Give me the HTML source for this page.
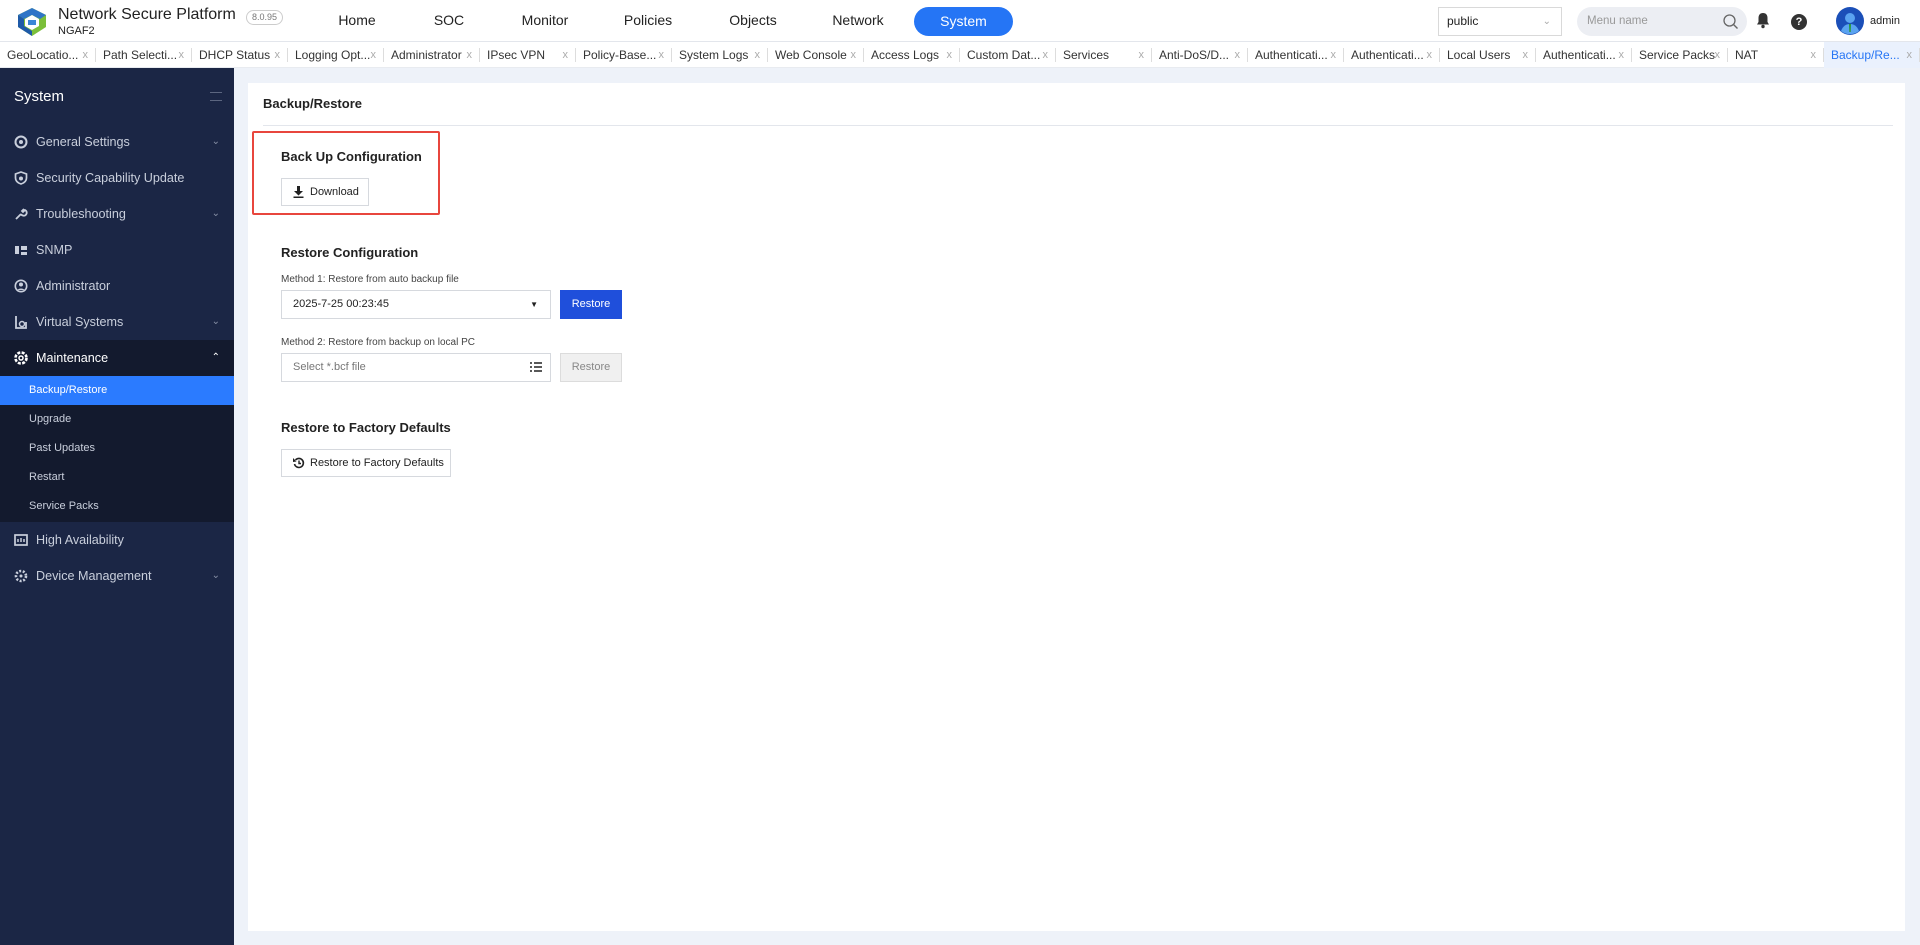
<!DOCTYPE html>
<html><head><meta charset="utf-8"><style>
*{box-sizing:border-box;margin:0;padding:0}
body{width:1920px;height:945px;overflow:hidden;font-family:"Liberation Sans",Arial,sans-serif;background:#eef2f9;position:relative;color:#222}
.hdr{position:absolute;left:0;top:0;width:1920px;height:42px;background:#fff;border-bottom:1px solid #e3e6ec}
.abs{position:absolute}
.nav{position:absolute;top:12px;font-size:14px;color:#222;transform:translateX(-50%)}
.tabs{position:absolute;top:42px;left:0;width:1920px;height:26px;background:#fff;border-bottom:1px solid #e8ebf0}
.tab{position:absolute;top:0;height:26px;width:96px;font-size:12px;line-height:26px;padding-left:7px;color:#333;white-space:nowrap}
.tab:after{content:"";position:absolute;right:0;top:6px;height:14px;border-right:1px solid #ddd}
.tab i{position:absolute;right:8px;top:0;font-style:normal;color:#aaa;font-size:11px}
.side{position:absolute;left:0;top:68px;width:234px;height:877px;background:#1b2645}
.mi{position:absolute;left:0;width:234px;height:36px;line-height:36px;font-size:12.6px;color:#c9cfdc;padding-left:36px}
.mi svg{position:absolute;left:14px;top:11px}
.mi .ch{position:absolute;right:14px;top:0;font-size:10px;color:#8790a6}
.sub{position:absolute;left:0;width:234px;height:29px;line-height:29px;font-size:11px;color:#c9cfdc;padding-left:29px}
.card{position:absolute;left:248px;top:83px;width:1657px;height:848px;background:#fff}
.h{position:absolute;font-size:13px;font-weight:bold;color:#222}
.lbl{position:absolute;font-size:10px;color:#444}
.btn{position:absolute;border:1px solid #d6d9de;background:#fff;font-size:11px;height:28px;line-height:26px;color:#222}
</style></head><body>
<div class="hdr">
 <svg class="abs" style="left:14px;top:7px" width="36" height="30" viewBox="0 0 36 30"><path d="M18 1 L32 8 L32 20 L18 29 L4 20 L4 8Z" fill="#7bbf3a"/><path d="M18 1 L32 8 L26 12 L18 8 L10 12 L4 8Z" fill="#2f75c7"/><path d="M4 8 L10 12 L10 19 L18 24 L18 29 L4 20Z" fill="#1e5aa8"/><path d="M11 12 L18 8 L25 12 L25 19 L18 23 L11 19Z" fill="#fff"/><path d="M14 13 L22 13 L22 18 L14 18Z" fill="#3a86d6"/></svg>
 <div class="abs" style="left:58px;top:6px;font-size:16px;color:#222">Network Secure Platform</div>
 <div class="abs" style="left:58px;top:25px;font-size:11px;color:#222">NGAF2</div>
 <div class="abs" style="left:246px;top:10px;width:37px;height:15px;border:1px solid #ccc;border-radius:8px;font-size:9px;color:#777;text-align:center;line-height:13px">8.0.95</div>
 <div class="nav" style="left:357px">Home</div>
 <div class="nav" style="left:449px">SOC</div>
 <div class="nav" style="left:545px">Monitor</div>
 <div class="nav" style="left:648px">Policies</div>
 <div class="nav" style="left:753px">Objects</div>
 <div class="nav" style="left:858px">Network</div>
 <div class="abs" style="left:914px;top:7px;width:99px;height:29px;border-radius:15px;background:#2575f5;color:#fff;font-size:14px;text-align:center;line-height:29px">System</div>
 <div class="abs" style="left:1438px;top:7px;width:124px;height:29px;border:1px solid #d9d9d9;font-size:12px;line-height:27px;padding-left:8px;color:#222">public<span style="position:absolute;right:10px;color:#aaa;font-size:10px">&#8964;</span></div>
 <div class="abs" style="left:1577px;top:7px;width:170px;height:29px;border-radius:15px;background:#eceef3;font-size:11.5px;line-height:29px;padding-left:10px;color:#999">Menu name
  <svg class="abs" style="right:8px;top:6px" width="17" height="17" viewBox="0 0 17 17"><circle cx="7.5" cy="7.5" r="5.5" fill="none" stroke="#666" stroke-width="1.3"/><path d="M11.5 11.5l4 4" stroke="#666" stroke-width="1.4"/></svg></div>
 <svg class="abs" style="left:1756px;top:12px" width="14" height="17" viewBox="0 0 14 17"><path d="M7 1c-3 0-4.5 2-4.5 5v4L1 12.5h12L11.5 10V6C11.5 3 10 1 7 1z" fill="#333"/><circle cx="7" cy="14.5" r="1.7" fill="#333"/></svg>
 <div class="abs" style="left:1791px;top:14px;width:16px;height:16px;border-radius:50%;background:#333;color:#fff;font-size:11px;font-weight:bold;text-align:center;line-height:16px">?</div>
 <svg class="abs" style="left:1836px;top:7px" width="28" height="28" viewBox="0 0 28 28"><circle cx="14" cy="14" r="14" fill="#1b4fb8"/><circle cx="14" cy="11" r="5" fill="#5aa3f0"/><path d="M5 24c2-5 5-7 9-7s7 2 9 7a14 14 0 0 1-18 0z" fill="#5aa3f0"/><path d="M13 17h2l-.3 8h-1.4z" fill="#2a9a3a"/></svg>
 <div class="abs" style="left:1870px;top:15px;font-size:11px;color:#222">admin</div>
</div>
<div class="tabs">
 <div class="tab" style="left:0">GeoLocatio...<i>x</i></div>
 <div class="tab" style="left:96px">Path Selecti...<i>x</i></div>
 <div class="tab" style="left:192px">DHCP Status<i>x</i></div>
 <div class="tab" style="left:288px">Logging Opt...<i>x</i></div>
 <div class="tab" style="left:384px">Administrator<i>x</i></div>
 <div class="tab" style="left:480px">IPsec VPN<i>x</i></div>
 <div class="tab" style="left:576px">Policy-Base...<i>x</i></div>
 <div class="tab" style="left:672px">System Logs<i>x</i></div>
 <div class="tab" style="left:768px">Web Console<i>x</i></div>
 <div class="tab" style="left:864px">Access Logs<i>x</i></div>
 <div class="tab" style="left:960px">Custom Dat...<i>x</i></div>
 <div class="tab" style="left:1056px">Services<i>x</i></div>
 <div class="tab" style="left:1152px">Anti-DoS/D...<i>x</i></div>
 <div class="tab" style="left:1248px">Authenticati...<i>x</i></div>
 <div class="tab" style="left:1344px">Authenticati...<i>x</i></div>
 <div class="tab" style="left:1440px">Local Users<i>x</i></div>
 <div class="tab" style="left:1536px">Authenticati...<i>x</i></div>
 <div class="tab" style="left:1632px">Service Packs<i>x</i></div>
 <div class="tab" style="left:1728px">NAT<i>x</i></div>
 <div class="tab" style="left:1824px;background:#eaf1fd;color:#2575f5">Backup/Re...<i>x</i></div>
</div>
<div class="side">
 <div class="abs" style="left:14px;top:20px;font-size:15px;color:#fff">System</div>
 <div class="abs" style="left:210px;top:24px;width:12px;height:9px;border-top:1px solid #5c6680;border-bottom:1px solid #5c6680"></div>
 <div class="mi" style="top:56px"><svg width="14" height="14"><circle cx="7" cy="7" r="5.5" fill="none" stroke="#c9cfdc" stroke-width="2"/><circle cx="7" cy="7" r="2" fill="#c9cfdc"/></svg>General Settings<span class="ch">&#8964;</span></div>
 <div class="mi" style="top:92px"><svg width="14" height="14"><path d="M7 1l5.5 2v4c0 3-2.5 5-5.5 6-3-1-5.5-3-5.5-6V3z" fill="none" stroke="#c9cfdc" stroke-width="1.7"/><circle cx="7" cy="7.5" r="2" fill="#c9cfdc"/></svg>Security Capability Update</div>
 <div class="mi" style="top:128px"><svg width="14" height="14"><path d="M2 12l5-5M7 7a3 3 0 1 0 4-4l-2 2-1-1 2-2" fill="none" stroke="#c9cfdc" stroke-width="1.8"/></svg>Troubleshooting<span class="ch">&#8964;</span></div>
 <div class="mi" style="top:164px"><svg width="14" height="14"><path d="M1 3h4v8H1zM7 3h6v4H7zM7 9h6v3H7z" fill="#c9cfdc"/></svg>SNMP</div>
 <div class="mi" style="top:200px"><svg width="14" height="14"><circle cx="7" cy="7" r="5.7" fill="none" stroke="#c9cfdc" stroke-width="1.6"/><circle cx="7" cy="5.5" r="2" fill="#c9cfdc"/><path d="M3.5 11a4 3 0 0 1 7 0" fill="#c9cfdc"/></svg>Administrator</div>
 <div class="mi" style="top:236px"><svg width="14" height="14"><path d="M2 1v12h10V7" fill="none" stroke="#c9cfdc" stroke-width="1.8"/><circle cx="8" cy="9" r="2.5" fill="none" stroke="#c9cfdc" stroke-width="1.5"/></svg>Virtual Systems<span class="ch">&#8964;</span></div>
 <div class="mi" style="top:272px;background:#131a2e;color:#fff"><svg width="14" height="14"><circle cx="7" cy="7" r="5.5" fill="none" stroke="#fff" stroke-width="2.6" stroke-dasharray="3 1.4"/><circle cx="7" cy="7" r="2" fill="none" stroke="#fff" stroke-width="1.5"/></svg>Maintenance<span class="ch" style="color:#fff">&#8963;</span></div>
 <div class="abs" style="left:0;top:308px;width:234px;height:146px;background:#131a2e"></div>
 <div class="sub" style="top:308px;background:#2b7bff;color:#fff">Backup/Restore</div>
 <div class="sub" style="top:337px">Upgrade</div>
 <div class="sub" style="top:366px">Past Updates</div>
 <div class="sub" style="top:395px">Restart</div>
 <div class="sub" style="top:424px">Service Packs</div>
 <div class="mi" style="top:454px"><svg width="14" height="14"><rect x="1" y="2" width="12" height="10" fill="none" stroke="#c9cfdc" stroke-width="1.7"/><path d="M4 9V6M7 9V5M10 9V6" stroke="#c9cfdc" stroke-width="1.5"/></svg>High Availability</div>
 <div class="mi" style="top:490px"><svg width="14" height="14"><circle cx="7" cy="7" r="5" fill="none" stroke="#c9cfdc" stroke-width="2.6" stroke-dasharray="2 1.6"/><circle cx="7" cy="7" r="1.5" fill="#c9cfdc"/></svg>Device Management<span class="ch">&#8964;</span></div>
</div>
<div class="card">
 <div class="h" style="left:15px;top:13px">Backup/Restore</div>
 <div class="abs" style="left:15px;top:42px;width:1630px;height:1px;background:#e3e6ec"></div>
 <div class="abs" style="left:4px;top:48px;width:188px;height:84px;border:2px solid #e8463d;border-radius:2px"></div>
 <div class="h" style="left:33px;top:66px">Back Up Configuration</div>
 <div class="btn" style="left:33px;top:95px;width:88px;padding-left:28px">
  <svg class="abs" style="left:11px;top:7px" width="11" height="12" viewBox="0 0 11 12"><path d="M4 0h3v5h3L5.5 9.5 1 5h3z" fill="#222"/><rect x="0.5" y="10.5" width="10" height="1.5" fill="#222"/></svg>Download</div>
 <div class="h" style="left:33px;top:162px">Restore Configuration</div>
 <div class="lbl" style="left:33px;top:191px">Method 1: Restore from auto backup file</div>
 <div class="abs" style="left:33px;top:207px;width:270px;height:29px;border:1px solid #d6d9de;font-size:11px;line-height:27px;padding-left:11px">2025-7-25 00:23:45<span style="position:absolute;right:12px;top:0;font-size:8px">&#9660;</span></div>
 <div class="abs" style="left:312px;top:207px;width:62px;height:29px;background:#1f4fdb;color:#fff;font-size:11px;text-align:center;line-height:29px">Restore</div>
 <div class="lbl" style="left:33px;top:254px">Method 2: Restore from backup on local PC</div>
 <div class="abs" style="left:33px;top:270px;width:270px;height:29px;border:1px solid #d6d9de;font-size:11px;line-height:27px;padding-left:11px;color:#777">Select *.bcf file
  <svg class="abs" style="right:8px;top:8px" width="12" height="10" viewBox="0 0 12 10"><path d="M0 1h2M4 1h8M0 5h2M4 5h8M0 9h2M4 9h8" stroke="#222" stroke-width="1.6"/></svg></div>
 <div class="abs" style="left:312px;top:270px;width:62px;height:29px;background:#f0f0f0;border:1px solid #dcdcdc;color:#888;font-size:11px;text-align:center;line-height:27px">Restore</div>
 <div class="h" style="left:33px;top:337px">Restore to Factory Defaults</div>
 <div class="btn" style="left:33px;top:366px;width:170px;padding-left:28px">
  <svg class="abs" style="left:11px;top:7px" width="12" height="12" viewBox="0 0 12 12"><path d="M2.5 3A4.5 4.5 0 1 1 1.5 7" fill="none" stroke="#222" stroke-width="1.6"/><path d="M0 1l3.5 3.5L0 5z" fill="#222"/><path d="M6 3.5v3h2" fill="none" stroke="#222" stroke-width="1.4"/></svg>Restore to Factory Defaults</div>
</div>
</body></html>
